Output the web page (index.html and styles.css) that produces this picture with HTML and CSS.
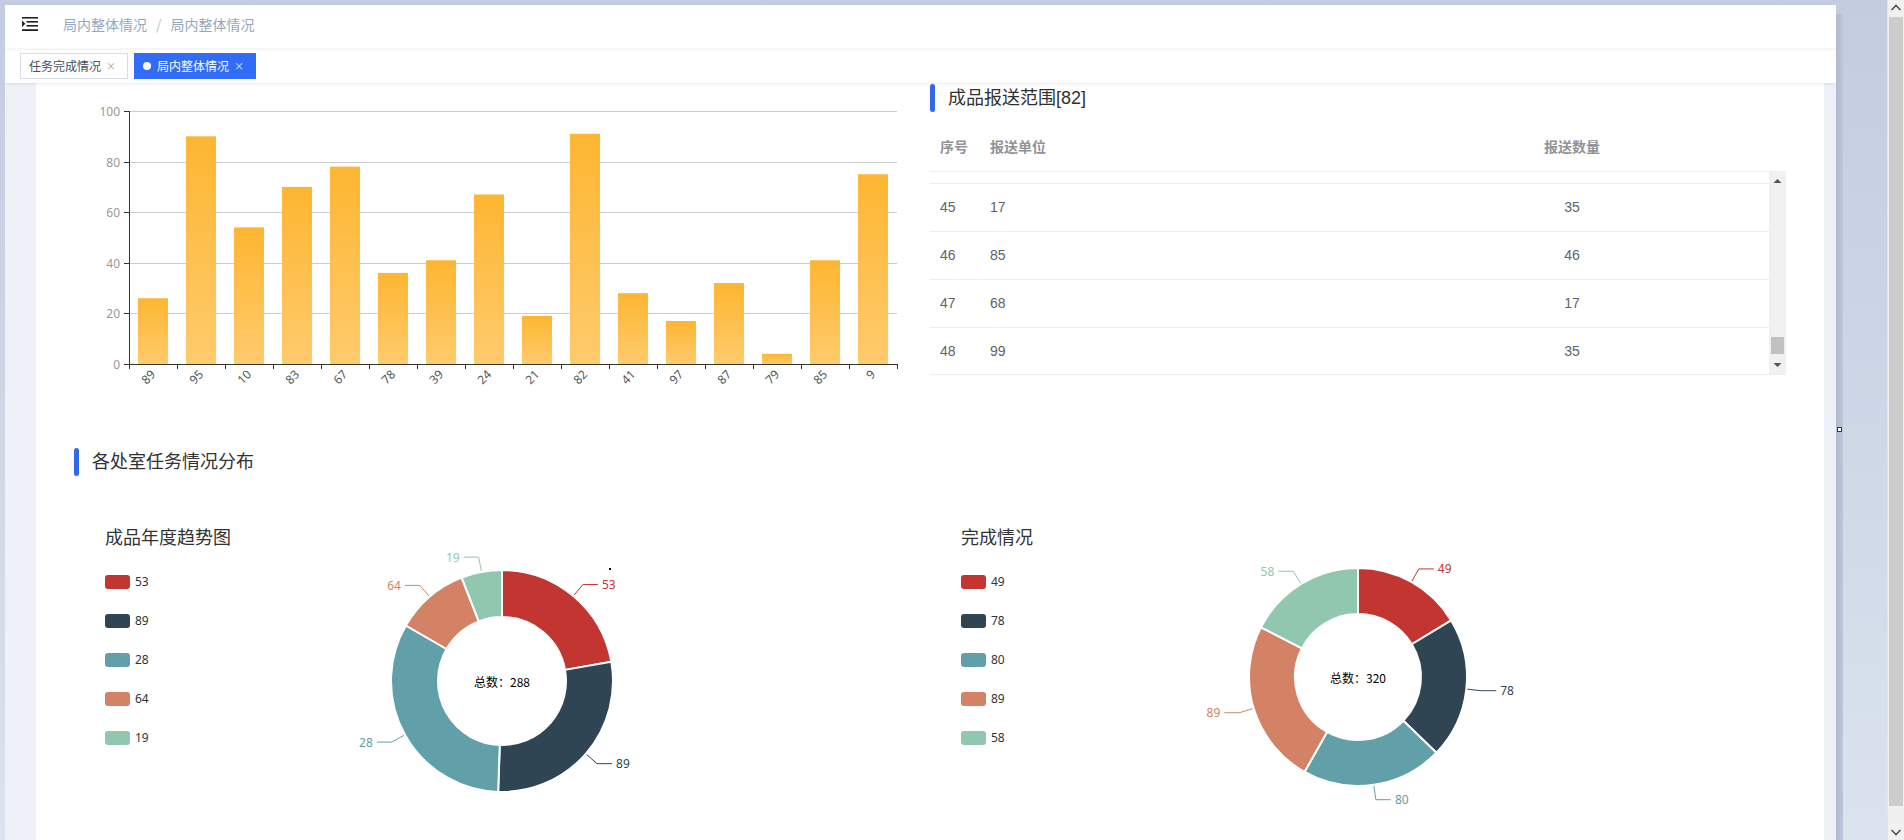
FILE: index.html
```html
<!DOCTYPE html>
<html lang="zh-CN">
<head>
<meta charset="utf-8">
<title>局内整体情况</title>
<link rel="stylesheet" href="styles.css">
</head>
<body>
<div class="desk">
  <div class="window">
    <header class="navbar">
      <svg class="hamburger" viewBox="0 0 16 14" width="16" height="14">
        <rect x="0" y="0" width="16" height="1.6" fill="#222"/>
        <rect x="4.5" y="4" width="11.5" height="1.6" fill="#222"/>
        <rect x="4.5" y="8" width="11.5" height="1.6" fill="#222"/>
        <polygon points="0,3.6 3.4,6.8 0,10" fill="#222"/>
        <rect x="0" y="12.2" width="16" height="1.8" fill="#222"/>
      </svg>
      <nav class="breadcrumb"><span>局内整体情况</span><span class="sep">/</span><span>局内整体情况</span></nav>
    </header>
    <div class="tags">
      <div class="tag">任务完成情况<span class="close">×</span></div>
      <div class="tag active"><span class="dot"></span>局内整体情况<span class="close">×</span></div>
    </div>
    <main class="content">
      <div class="panel">
        <div class="top-row">
          <div class="bar-card">
            <svg id="bar-chart" class="chart" width="894" height="312" viewBox="0 0 894 312">
              <defs>
                <linearGradient id="barGrad" x1="0" y1="0" x2="0" y2="1">
                  <stop offset="0" stop-color="#fdb631"/>
                  <stop offset="1" stop-color="#ffcb6d"/>
                </linearGradient>
              </defs>
            </svg>
          </div>
          <div class="table-card">
            <div class="block-title"><i class="accent"></i>成品报送范围[82]</div>
            <div class="table">
              <div class="thead">
                <div class="c1">序号</div><div class="c2">报送单位</div><div class="c3">报送数量</div>
              </div>
              <div class="tbody-wrap">
                <div class="tbody">
                  <div class="rows">
                    <div class="row row-partial"></div>
                    <div class="row"><div class="c1">45</div><div class="c2">17</div><div class="c3">35</div></div>
                    <div class="row"><div class="c1">46</div><div class="c2">85</div><div class="c3">46</div></div>
                    <div class="row"><div class="c1">47</div><div class="c2">68</div><div class="c3">17</div></div>
                    <div class="row"><div class="c1">48</div><div class="c2">99</div><div class="c3">35</div></div>
                  </div>
                </div>
                <div class="tscroll">
                  <div class="ts-btn"><svg width="17" height="17" viewBox="0 0 17 17"><polygon points="4.5,11 8.5,7 12.5,11" fill="#555"/></svg></div>
                  <div class="ts-track"><div class="ts-thumb"></div></div>
                  <div class="ts-btn"><svg width="17" height="17" viewBox="0 0 17 17"><polygon points="4.5,6 8.5,10 12.5,6" fill="#555"/></svg></div>
                </div>
              </div>
            </div>
          </div>
        </div>
        <section class="dist">
          <div class="block-title"><i class="accent"></i>各处室任务情况分布</div>
          <div class="pie-row">
            <div class="pie-card">
              <div class="pie-legend">
                <h3 class="pie-title">成品年度趋势图</h3>
                <ul class="legend">
                  <li><i class="sw c-red"></i>53</li>
                  <li><i class="sw c-dark"></i>89</li>
                  <li><i class="sw c-teal"></i>28</li>
                  <li><i class="sw c-salmon"></i>64</li>
                  <li><i class="sw c-mint"></i>19</li>
                </ul>
              </div>
              <svg id="pie1" class="chart pie" width="380" height="320" viewBox="0 0 380 320">
                <rect x="279" y="68" width="2" height="2" fill="#000"/>
              </svg>
            </div>
            <div class="pie-card">
              <div class="pie-legend">
                <h3 class="pie-title">完成情况</h3>
                <ul class="legend">
                  <li><i class="sw c-red"></i>49</li>
                  <li><i class="sw c-dark"></i>78</li>
                  <li><i class="sw c-teal"></i>80</li>
                  <li><i class="sw c-salmon"></i>89</li>
                  <li><i class="sw c-mint"></i>58</li>
                </ul>
              </div>
              <svg id="pie2" class="chart pie" width="380" height="320" viewBox="0 0 380 320"></svg>
            </div>
          </div>
        </section>
      </div>
    </main>
  </div>
  <div class="win-shadow"></div>
  <div class="spacer"></div>
  <div class="vscroll">
    <div class="vs-btn"><svg width="16" height="17" viewBox="0 0 16 17"><polyline points="3.5,10 8,5.5 12.5,10" fill="none" stroke="#505050" stroke-width="1.6"/></svg></div>
    <div class="vs-thumb"></div>
    <div class="vs-gap"></div>
    <div class="vs-btn"><svg width="16" height="17" viewBox="0 0 16 17"><polyline points="3.5,7 8,11.5 12.5,7" fill="none" stroke="#505050" stroke-width="1.6"/></svg></div>
  </div>
</div>
<div class="resize-handle"></div>
<script src="script.js"></script>
</body>
</html>
```

FILE: styles.css
```css
* { box-sizing: border-box; }
html, body { margin: 0; padding: 0; }
body {
  width: 1904px;
  height: 840px;
  overflow: hidden;
  background: linear-gradient(180deg, #c4cde0 0%, #cfd8e7 55%, #dbe3ef 100%);
  font-family: "Noto Sans CJK SC", "Noto Sans", sans-serif;
  color: #333;
}
.desk { display: flex; height: 840px; padding: 5px 0 0 5px; }
.window {
  width: 1831px;
  height: 835px;
  flex: none;
  display: flex;
  flex-direction: column;
  background: #eef2f8;
  overflow: hidden;
}
.navbar {
  height: 43px;
  flex: none;
  background: #fff;
  display: flex;
  align-items: center;
  padding: 0 0 6px 17px;
  box-shadow: 0 1px 4px rgba(0, 21, 41, 0.08);
  position: relative;
  z-index: 2;
}
.hamburger { display: block; }
.breadcrumb { margin-left: 25px; font-size: 14px; line-height: 20px; color: #97a8be; display: flex; }
.breadcrumb .sep { margin: 0 9px; color: #c0c4cc; }

.tags {
  height: 35px;
  flex: none;
  background: #fff;
  display: flex;
  align-items: flex-start;
  gap: 6px;
  padding: 5px 0 0 15px;
  box-shadow: 0 1px 3px rgba(0, 0, 0, 0.08), 0 0 3px rgba(0, 0, 0, 0.03);
  position: relative;
  z-index: 1;
}
.tag {
  height: 26px;
  border: 1px solid #d8dce5;
  padding: 0 10px 0 8px;
  font-size: 12px;
  line-height: 24px;
  color: #495060;
  display: flex;
  align-items: center;
  background: #fff;
}
.tag .close { width: 12px; margin-left: 4px; text-align: center; font-size: 10px; color: #a3a7ae; }
.tag.active { background: #306cf6; border-color: #306cf6; color: #fff; }
.tag.active .close { color: #e8eeff; }
.tag .dot { width: 8px; height: 8px; border-radius: 50%; background: #fff; margin-right: 6px; }

.content { flex: 1; min-height: 0; display: flex; padding: 0 12px 0 31px; }
.panel { width: 1788px; flex: none; background: #fff; }
.top-row { display: flex; height: 312px; }
.bar-card { width: 894px; flex: none; }
.chart { display: block; font-family: "Noto Sans", "Noto Sans CJK SC", sans-serif; }
.table-card { width: 856px; flex: none; }

.block-title {
  display: flex;
  align-items: center;
  height: 28px;
  font-size: 18px;
  line-height: 28px;
  color: #303133;
  font-family: "Liberation Sans", "Noto Sans CJK SC", sans-serif;
}
.accent { width: 5px; height: 28px; border-radius: 3px; background: #3169ea; margin-right: 13px; flex: none; }
.table-card .block-title { margin-top: 1px; }

.table {
  margin-top: 12px;
  border-bottom: 1px solid #ebeef5;
  font-family: "Liberation Sans", "Noto Sans CJK SC", sans-serif;
}
.thead {
  display: flex;
  height: 48px;
  border-bottom: 1px solid #ebeef5;
  font-size: 14px;
  line-height: 47px;
  font-weight: bold;
  color: #909399;
}
.c1 { width: 50px; padding-left: 10px; flex: none; }
.c2 { width: 395px; padding-left: 10px; flex: none; }
.c3 { width: 394px; text-align: center; flex: none; }
.tbody-wrap { display: flex; height: 202px; }
.tbody { width: 839px; height: 202px; overflow: hidden; flex: none; }
.rows { margin-top: -36px; }
.row {
  display: flex;
  height: 48px;
  border-bottom: 1px solid #ebeef5;
  font-size: 14px;
  line-height: 47px;
  color: #606266;
}
.tscroll { width: 17px; flex: none; background: #f1f1f1; display: flex; flex-direction: column; }
.ts-btn { height: 17px; flex: none; }
.ts-btn svg { display: block; }
.ts-track { flex: 1; display: flex; flex-direction: column; justify-content: flex-end; padding-bottom: 3px; }
.ts-thumb { height: 17px; margin: 0 2px; background: #c1c1c1; }

.dist { padding-left: 38px; margin-top: 53px; }
.pie-row { display: flex; margin-top: 24px; }
.pie-card { width: 856px; flex: none; display: flex; align-items: flex-start; padding-left: 31px; }
.pie-legend { width: 225px; flex: none; padding-top: 24px; }
.pie-title { margin: 0; font-size: 18px; line-height: 24px; font-weight: normal; color: #333; }
.legend { list-style: none; margin: 27px 0 0; padding: 0; }
.legend li {
  display: flex;
  align-items: center;
  height: 14px;
  margin-bottom: 25px;
  font-size: 12px;
  line-height: 14px;
  color: #333;
  font-family: "Noto Sans", sans-serif;
}
.sw { width: 25px; height: 14px; border-radius: 3px; margin-right: 5px; flex: none; }
.c-red { background: #c23531; }
.c-dark { background: #2f4554; }
.c-teal { background: #61a0a8; }
.c-salmon { background: #d48265; }
.c-mint { background: #91c7ae; }

.grid { stroke: #cccccc; stroke-width: 1; }
.axis { stroke: #333; stroke-width: 1; }
.ylab { font-size: 12px; fill: #999; text-anchor: end; dominant-baseline: central; }
.xlab { font-size: 12px; fill: #555; text-anchor: end; dominant-baseline: central; }
.plab { font-size: 12px; dominant-baseline: central; }
.ptotal { font-size: 12px; fill: #000; text-anchor: middle; dominant-baseline: central; font-family: "Noto Sans CJK SC", sans-serif; }

.win-shadow { width: 7px; flex: none; margin-top: 9px; background: linear-gradient(90deg, #aebacf, #bcc7da); }
.spacer { flex: 1; }
.vscroll {
  width: 17px;
  flex: none;
  margin-top: -5px;
  height: 840px;
  background: #f0f0f0;
  border-left: 1px solid #e4e4e4;
  display: flex;
  flex-direction: column;
}
.vs-btn { height: 17px; flex: none; }
.vs-btn svg { display: block; }
.vs-thumb { height: 789px; flex: none; margin: 0 1px 0 1px; background: #cdcdcd; }
.vs-gap { flex: 1; }

.resize-handle {
  position: absolute;
  left: 1837px;
  top: 427px;
  width: 5px;
  height: 5px;
  border: 1px solid #3a3a3a;
  background: #fff;
}
```

FILE: script.js
```js
(function () {
  var NS = 'http://www.w3.org/2000/svg';
  function mk(tag, attrs, parent, text) {
    var e = document.createElementNS(NS, tag);
    for (var k in attrs) e.setAttribute(k, attrs[k]);
    if (text != null) e.textContent = text;
    parent.appendChild(e);
    return e;
  }

  // ---- bar chart ----
  var bar = document.getElementById('bar-chart');
  var cats = [89, 95, 10, 83, 67, 78, 39, 24, 21, 82, 41, 97, 87, 79, 85, 9];
  var vals = [26, 90, 54, 70, 78, 36, 41, 67, 19, 91, 28, 17, 32, 4, 41, 75];
  var X0 = 93, X1 = 861, TOP = 28, ZERO = 281, STEP = 48, U = (ZERO - TOP) / 100;
  var i, y;
  for (i = 0; i <= 5; i++) {
    y = Math.round(ZERO - i * 20 * U) + 0.5;
    if (i > 0) mk('line', { x1: X0, x2: X1, y1: y, y2: y, 'class': 'grid' }, bar);
    mk('line', { x1: X0 - 5, x2: X0, y1: y, y2: y, 'class': 'axis' }, bar);
    mk('text', { x: X0 - 9, y: y, 'class': 'ylab' }, bar, String(i * 20));
  }
  for (i = 0; i < vals.length; i++) {
    var h = vals[i] * U;
    mk('rect', { x: X0 + STEP * i + 9, y: ZERO - h, width: 30, height: h, fill: 'url(#barGrad)' }, bar);
  }
  mk('line', { x1: X0 + 0.5, x2: X0 + 0.5, y1: TOP, y2: ZERO + 1, 'class': 'axis' }, bar);
  mk('line', { x1: X0, x2: X1 + 1, y1: ZERO + 0.5, y2: ZERO + 0.5, 'class': 'axis' }, bar);
  for (i = 0; i <= cats.length; i++) {
    var tx = X0 + STEP * i + 0.5;
    mk('line', { x1: tx, x2: tx, y1: ZERO, y2: ZERO + 5, 'class': 'axis' }, bar);
  }
  for (i = 0; i < cats.length; i++) {
    var cx = X0 + STEP * i + 24, py = ZERO + 8;
    mk('text', { x: cx, y: py, 'class': 'xlab', transform: 'rotate(-45 ' + cx + ' ' + py + ')' }, bar, String(cats[i]));
  }

  // ---- pies ----
  var C = { red: '#c23531', dark: '#2f4554', teal: '#61a0a8', salmon: '#d48265', mint: '#91c7ae' };
  function pie(svg, cx, cy, rIn, rOut, segs, total) {
    function pt(r, a) {
      var t = a * Math.PI / 180;
      return [+(cx + r * Math.sin(t)).toFixed(2), +(cy - r * Math.cos(t)).toFixed(2)];
    }
    var R = rOut + 1;
    segs.forEach(function (s) {
      var a0 = s[2], a1 = s[3];
      var large = (a1 - a0) > 180 ? 1 : 0;
      var p0 = pt(R, a0), p1 = pt(R, a1), q1 = pt(rIn, a1), q0 = pt(rIn, a0);
      var d = 'M' + p0 + ' A' + R + ' ' + R + ' 0 ' + large + ' 1 ' + p1 +
        ' L' + q1 + ' A' + rIn + ' ' + rIn + ' 0 ' + large + ' 0 ' + q0 + ' Z';
      mk('path', { d: d, fill: s[1], stroke: '#fff', 'stroke-width': 2, 'stroke-linejoin': 'round' }, svg);
    });
    segs.forEach(function (s) {
      var m = (s[2] + s[3]) / 2;
      var side = Math.sin(m * Math.PI / 180) >= 0 ? 1 : -1;
      var l1 = pt(rOut + 2, m), l2 = pt(rOut + 16, m);
      var l3 = [l2[0] + 15 * side, l2[1]];
      mk('polyline', { points: l1.join(',') + ' ' + l2.join(',') + ' ' + l3.join(','), fill: 'none', stroke: s[1], 'stroke-width': 1 }, svg);
      mk('text', { x: l3[0] + 4 * side, y: l3[1], 'class': 'plab', fill: s[1], 'text-anchor': side > 0 ? 'start' : 'end' }, svg, s[0]);
    });
    mk('text', { x: cx, y: cy, 'class': 'ptotal' }, svg, '总数：' + total);
  }

  pie(document.getElementById('pie1'), 172, 181, 64, 110, [
    ['53', C.red, 0, 80],
    ['89', C.dark, 80, 182],
    ['28', C.teal, 182, 300],
    ['64', C.salmon, 300, 338.7],
    ['19', C.mint, 338.7, 360]
  ], 288);

  pie(document.getElementById('pie2'), 172, 177, 63, 108, [
    ['49', C.red, 0, 58.7],
    ['78', C.dark, 58.7, 134],
    ['80', C.teal, 134, 209.4],
    ['89', C.salmon, 209.4, 297.1],
    ['58', C.mint, 297.1, 360]
  ], 320);
})();
```
